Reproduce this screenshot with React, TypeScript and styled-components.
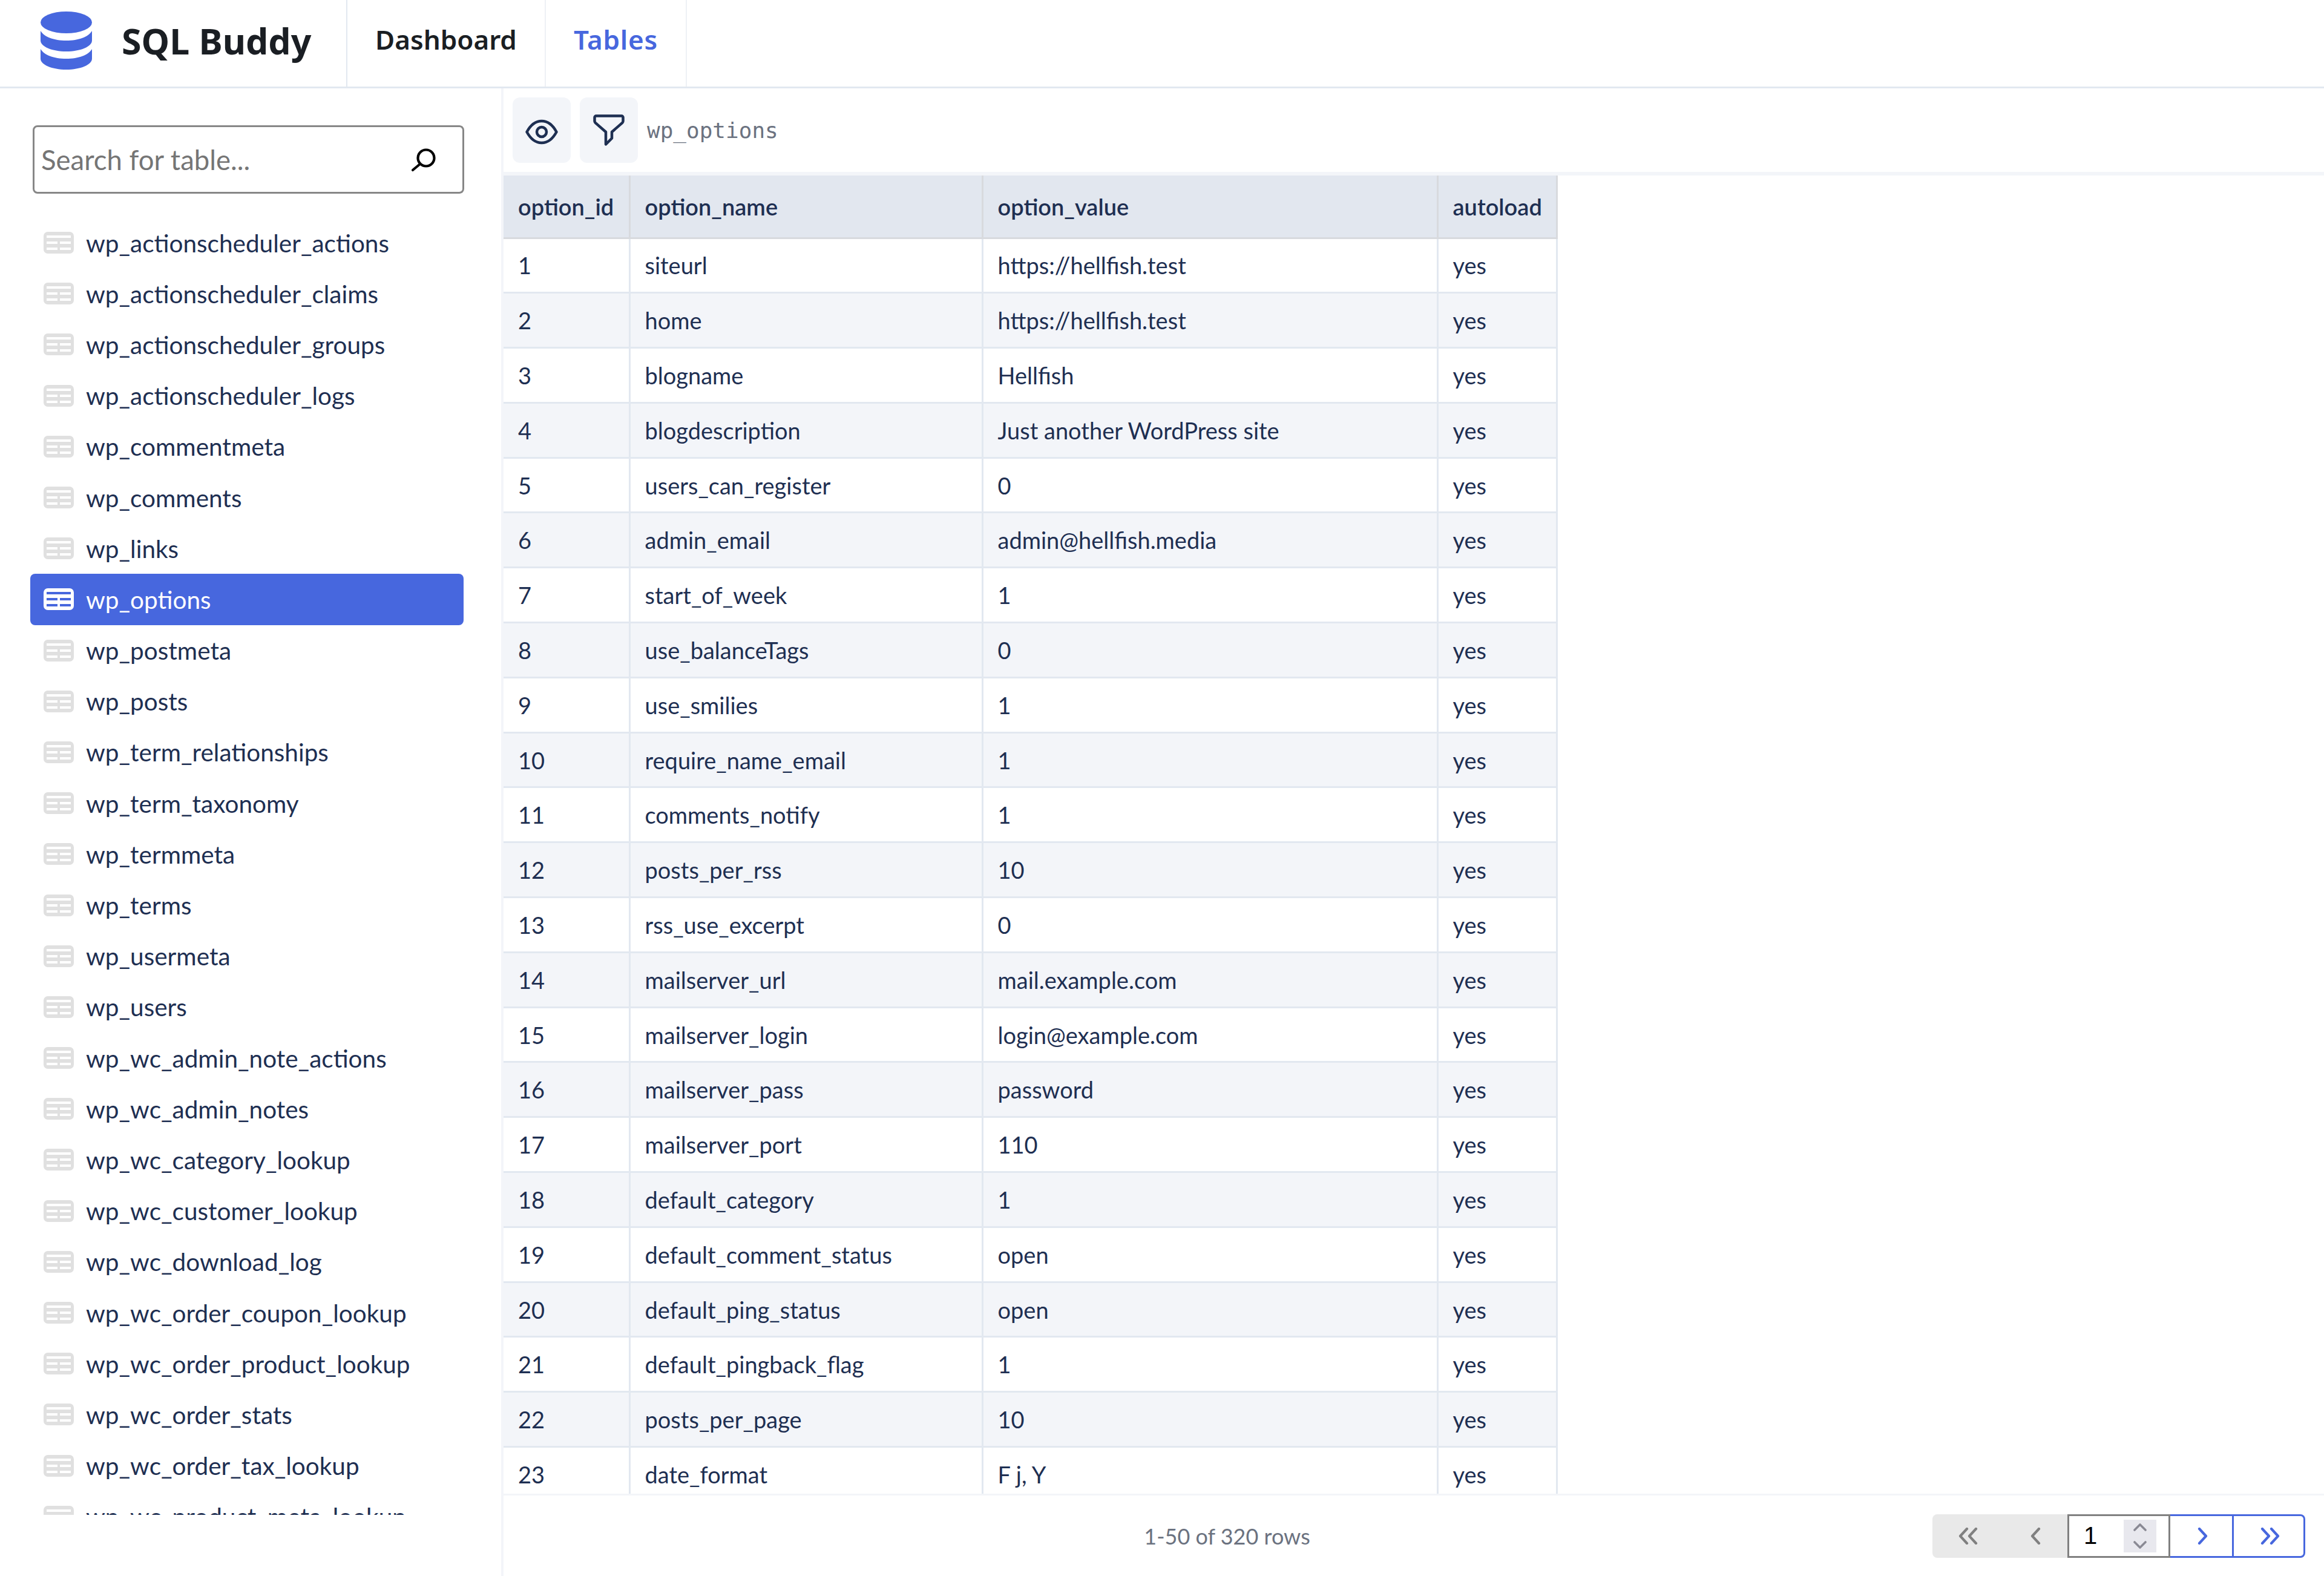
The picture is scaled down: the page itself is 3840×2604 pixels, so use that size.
import styled, { createGlobalStyle } from 'styled-components';

const TABLES = [
  'wp_actionscheduler_actions',
  'wp_actionscheduler_claims',
  'wp_actionscheduler_groups',
  'wp_actionscheduler_logs',
  'wp_commentmeta',
  'wp_comments',
  'wp_links',
  'wp_options',
  'wp_postmeta',
  'wp_posts',
  'wp_term_relationships',
  'wp_term_taxonomy',
  'wp_termmeta',
  'wp_terms',
  'wp_usermeta',
  'wp_users',
  'wp_wc_admin_note_actions',
  'wp_wc_admin_notes',
  'wp_wc_category_lookup',
  'wp_wc_customer_lookup',
  'wp_wc_download_log',
  'wp_wc_order_coupon_lookup',
  'wp_wc_order_product_lookup',
  'wp_wc_order_stats',
  'wp_wc_order_tax_lookup',
  'wp_wc_product_meta_lookup',
];

const ROWS: [number, string, string][] = [
  [1, 'siteurl', 'https://hellfish.test'],
  [2, 'home', 'https://hellfish.test'],
  [3, 'blogname', 'Hellfish'],
  [4, 'blogdescription', 'Just another WordPress site'],
  [5, 'users_can_register', '0'],
  [6, 'admin_email', 'admin@hellfish.media'],
  [7, 'start_of_week', '1'],
  [8, 'use_balanceTags', '0'],
  [9, 'use_smilies', '1'],
  [10, 'require_name_email', '1'],
  [11, 'comments_notify', '1'],
  [12, 'posts_per_rss', '10'],
  [13, 'rss_use_excerpt', '0'],
  [14, 'mailserver_url', 'mail.example.com'],
  [15, 'mailserver_login', 'login@example.com'],
  [16, 'mailserver_pass', 'password'],
  [17, 'mailserver_port', '110'],
  [18, 'default_category', '1'],
  [19, 'default_comment_status', 'open'],
  [20, 'default_ping_status', 'open'],
  [21, 'default_pingback_flag', '1'],
  [22, 'posts_per_page', '10'],
  [23, 'date_format', 'F j, Y'],
];

const BLUE = '#4767de';
const INK = '#1e2f52';

const GlobalStyle = createGlobalStyle`
  html, body {
    margin: 0;
    height: 100%;
    background: #fff;
  }
  * {
    box-sizing: border-box;
  }
`;

function TableIcon({ active }: { active: boolean }) {
  return (
    <TableGlyph viewBox="0 0 50 36" $active={active}>
      <path
        fillRule="evenodd"
        d="M7 0h36a7 7 0 0 1 7 7v22a7 7 0 0 1-7 7H7a7 7 0 0 1-7-7V7a7 7 0 0 1 7-7Zm-2 6v4h40V6Zm0 10v4h18v-4Zm22 0v4h18v-4ZM5 26v4h18v-4Zm22 0v4h18v-4Z"
      />
    </TableGlyph>
  );
}

function Chevrons({ double, dir }: { double?: boolean; dir: 'left' | 'right' }) {
  const d = dir === 'left' ? 'M14 2 3 14l11 12' : 'M3 2l11 12L3 26';
  return (
    <svg width={double ? 32 : 17} height="28" viewBox={double ? '0 0 32 28' : '0 0 17 28'} fill="none" stroke="currentColor" strokeWidth="4.2" strokeLinecap="round" strokeLinejoin="round">
      <path d={d} />
      {double && <path d={d} transform="translate(15 0)" />}
    </svg>
  );
}

export default function App() {
  return (
    <Page>
      <GlobalStyle />
      <Header>
        <Brand>
          <svg width="85" height="96" viewBox="0 0 85 96" fill={BLUE}>
            <ellipse cx="42.5" cy="18" rx="42.5" ry="18" />
            <path d="M0 32c6 10 22 16 42.5 16S79 42 85 32v16c0 10-19 18-42.5 18S0 58 0 48Z" />
            <path d="M0 62c6 10 22 16 42.5 16S79 72 85 62v16c0 10-19 18-42.5 18S0 88 0 78Z" />
          </svg>
          <BrandName>SQL Buddy</BrandName>
        </Brand>
        <NavTab>Dashboard</NavTab>
        <NavTab $active>Tables</NavTab>
      </Header>
      <Body>
        <Sidebar>
          <SearchBox>
            <SearchInput placeholder="Search for table..." />
            <svg width="42" height="40" viewBox="0 0 42 40" fill="none" stroke="#000" strokeWidth="4.2" strokeLinecap="round">
              <circle cx="26" cy="17" r="13.5" />
              <path d="M16 27 4 37" />
            </svg>
          </SearchBox>
          <TableList>
            {TABLES.map((name) => (
              <TableItem key={name} $active={name === 'wp_options'}>
                <TableIcon active={name === 'wp_options'} />
                {name}
              </TableItem>
            ))}
          </TableList>
        </Sidebar>
        <Main>
          <Toolbar>
            <ToolButton>
              <EyeIcon width="54" height="42" viewBox="0 0 54 42" fill="none" stroke={INK} strokeWidth="4.5" strokeLinejoin="round">
                <path d="M2.5 21C9 9 17 3 27 3s18 6 24.500 18C45 33 37 39 27 39S9 33 2.500 21Z" />
                <circle cx="27" cy="21" r="8" />
              </EyeIcon>
            </ToolButton>
            <ToolButton>
              <svg width="52" height="52" viewBox="0 0 52 52" fill="none" stroke={INK} strokeWidth="4.5" strokeLinejoin="round">
                <path d="M5 2.500h42a2.500 2.500 0 0 1 2.500 2.500v6a4 4 0 0 1-1.200 2.900L31 29v10.500L21 49.500V29L3.700 13.900A4 4 0 0 1 2.500 11V5A2.500 2.500 0 0 1 5 2.500Z" />
              </svg>
            </ToolButton>
            <TableName>wp_options</TableName>
          </Toolbar>
          <TableScroll>
            <DataTable>
              <colgroup>
                <col width="208" />
                <col width="583" />
                <col width="752" />
                <col width="197" />
              </colgroup>
              <thead>
                <tr>
                  <HeadCell>option_id</HeadCell>
                  <HeadCell>option_name</HeadCell>
                  <HeadCell>option_value</HeadCell>
                  <HeadCell>autoload</HeadCell>
                </tr>
              </thead>
              <tbody>
                {ROWS.map(([id, name, value]) => (
                  <DataRow key={id}>
                    <DataCell>{id}</DataCell>
                    <DataCell>{name}</DataCell>
                    <DataCell>{value}</DataCell>
                    <DataCell>yes</DataCell>
                  </DataRow>
                ))}
              </tbody>
            </DataTable>
          </TableScroll>
          <Footer>
            <RowCount>1-50 of 320 rows</RowCount>
            <Pagination>
              <PageButton $disabled $first>
                <Chevrons double dir="left" />
              </PageButton>
              <PageButton $disabled>
                <Chevrons dir="left" />
              </PageButton>
              <PageInput>
                1
                <Spinner>
                  <svg width="26" height="46" viewBox="0 0 26 46" fill="none" stroke="#8a8a94" strokeWidth="3.6" strokeLinecap="round" strokeLinejoin="round">
                    <path d="M4 13 13 4l9 9M4 33l9 9 9-9" />
                  </svg>
                </Spinner>
              </PageInput>
              <PageButton $width={105}>
                <Chevrons dir="right" />
              </PageButton>
              <PageButton $last $width={118}>
                <Chevrons double dir="right" />
              </PageButton>
            </Pagination>
          </Footer>
        </Main>
      </Body>
    </Page>
  );
}

const Page = styled.div`
  display: flex;
  flex-direction: column;
  width: 3840px;
  height: 2604px;
  overflow: hidden;
  font-family: Lato, 'Noto Sans', sans-serif;
  color: ${INK};
`;

const Header = styled.header`
  display: flex;
  flex: none;
  height: 146px;
  border-bottom: 3px solid #e2e8f0;
`;

const Brand = styled.div`
  display: flex;
  align-items: center;
  gap: 49px;
  width: 574px;
  padding: 0 0 9px 67px;
  border-right: 2px solid #e2e8f0;
`;

const BrandName = styled.div`
  font-family: 'Noto Sans', sans-serif;
  font-size: 59px;
  font-weight: 700;
  color: #1a1e23;
`;

const NavTab = styled.div<{ $active?: boolean }>`
  display: flex;
  align-items: center;
  padding: 0 46px 13px;
  border-right: 2px solid #eef1f5;
  font-family: 'Noto Sans', sans-serif;
  font-size: 44px;
  font-weight: 600;
  letter-spacing: ${({ $active }) => ($active ? '0.7px' : '0')};
  color: ${({ $active }) => ($active ? BLUE : '#1a1e23')};
`;

const Body = styled.div`
  display: flex;
  flex: 1;
  min-height: 0;
`;

const Sidebar = styled.aside`
  display: flex;
  flex: none;
  flex-direction: column;
  width: 832px;
  padding: 61px 0 101px;
  border-right: 4px solid #f3f5f9;
`;

const SearchBox = styled.div`
  display: flex;
  flex: none;
  align-items: center;
  width: 713px;
  height: 113px;
  margin-left: 54px;
  padding: 0 44px 0 11px;
  border: 3px solid #878787;
  border-radius: 8px;
`;

const SearchInput = styled.input`
  flex: 1;
  min-width: 0;
  border: 0;
  outline: 0;
  padding: 0;
  background: none;
  font-family: inherit;
  font-size: 45.5px;

  &::placeholder {
    color: #757575;
    opacity: 1;
  }
`;

const TableList = styled.div`
  flex: 1;
  min-height: 0;
  overflow: hidden;
  width: 716px;
  margin: 39px 0 0 50px;
`;

const TableItem = styled.div<{ $active: boolean }>`
  display: flex;
  align-items: center;
  gap: 20px;
  height: 84.2px;
  padding-left: 22px;
  border-radius: 8px;
  font-size: 40.5px;
  background: ${({ $active }) => ($active ? BLUE : 'transparent')};
  color: ${({ $active }) => ($active ? '#fff' : INK)};
`;

const TableGlyph = styled.svg<{ $active: boolean }>`
  flex: none;
  width: 50px;
  height: 36px;
  fill: ${({ $active }) => ($active ? '#fff' : '#e0e0e0')};
`;

const Main = styled.main`
  display: flex;
  flex: 1;
  min-width: 0;
  flex-direction: column;
`;

const Toolbar = styled.div`
  display: flex;
  flex: none;
  align-items: center;
  gap: 15px;
  height: 144px;
  padding: 0 0 0 15px;
  border-bottom: 6px solid #f3f5f9;
`;

const ToolButton = styled.div`
  display: flex;
  align-items: center;
  justify-content: center;
  width: 96px;
  height: 108px;
  border-radius: 12px;
  background: #f3f5f9;
`;

const EyeIcon = styled.svg`
  margin-top: 6px;
`;

const TableName = styled.div`
  font-family: 'DejaVu Sans Mono', monospace;
  font-size: 36px;
  color: #6b7280;
`;

const TableScroll = styled.div`
  flex: 1;
  min-height: 0;
  overflow: hidden;
`;

const DataTable = styled.table`
  width: 1740px;
  table-layout: fixed;
  border-collapse: collapse;
  font-size: 38px;
`;

const HeadCell = styled.th`
  height: 103px;
  padding: 0 24px;
  border-right: 3px solid #d8dade;
  border-bottom: 3px solid #d8dade;
  background: #e2e7ef;
  font-weight: 600;
  text-align: left;
  white-space: nowrap;
`;

const DataRow = styled.tr`
  &:nth-child(even) {
    background: #f3f5f9;
  }
`;

const DataCell = styled.td`
  height: 90.8px;
  padding: 0 24px;
  border-right: 3px solid #e2e8f0;
  border-bottom: 3px solid #e2e8f0;
  white-space: nowrap;
`;

const Footer = styled.footer`
  display: flex;
  flex: none;
  align-items: center;
  height: 136px;
  padding-right: 31px;
  border-top: 3px solid #f3f5f9;
`;

const RowCount = styled.div`
  flex: 1;
  padding-left: 30px;
  text-align: center;
  font-size: 36px;
  color: #6b7280;
`;

const Pagination = styled.div`
  display: flex;
  height: 72px;
`;

const PageButton = styled.div<{ $disabled?: boolean; $first?: boolean; $last?: boolean; $width?: number }>`
  display: flex;
  align-items: center;
  justify-content: center;
  width: ${({ $width }) => $width ?? 111.5}px;
  padding-left: ${({ $disabled }) => ($disabled ? '6px' : '4px')};
  background: ${({ $disabled }) => ($disabled ? '#e9e9e9' : '#fff')};
  color: ${({ $disabled }) => ($disabled ? '#808080' : BLUE)};
  border: ${({ $disabled }) => ($disabled ? '0' : `3px solid ${BLUE}`)};
  border-left: 0;
  border-radius: ${({ $first, $last }) =>
    $first ? '8px 0 0 8px' : $last ? '0 8px 8px 0' : '0'};
`;

const PageInput = styled.div`
  display: flex;
  align-items: center;
  justify-content: space-between;
  width: 170px;
  padding: 0 24px 0 24px;
  border: 3px solid #808080;
  font-family: 'Liberation Sans', sans-serif;
  font-size: 40px;
  color: #000;
`;

const Spinner = styled.div`
  display: flex;
  align-items: center;
  justify-content: center;
  width: 54px;
  height: 54px;
  margin-right: -4px;
  background: #e8e8ee;
`;
